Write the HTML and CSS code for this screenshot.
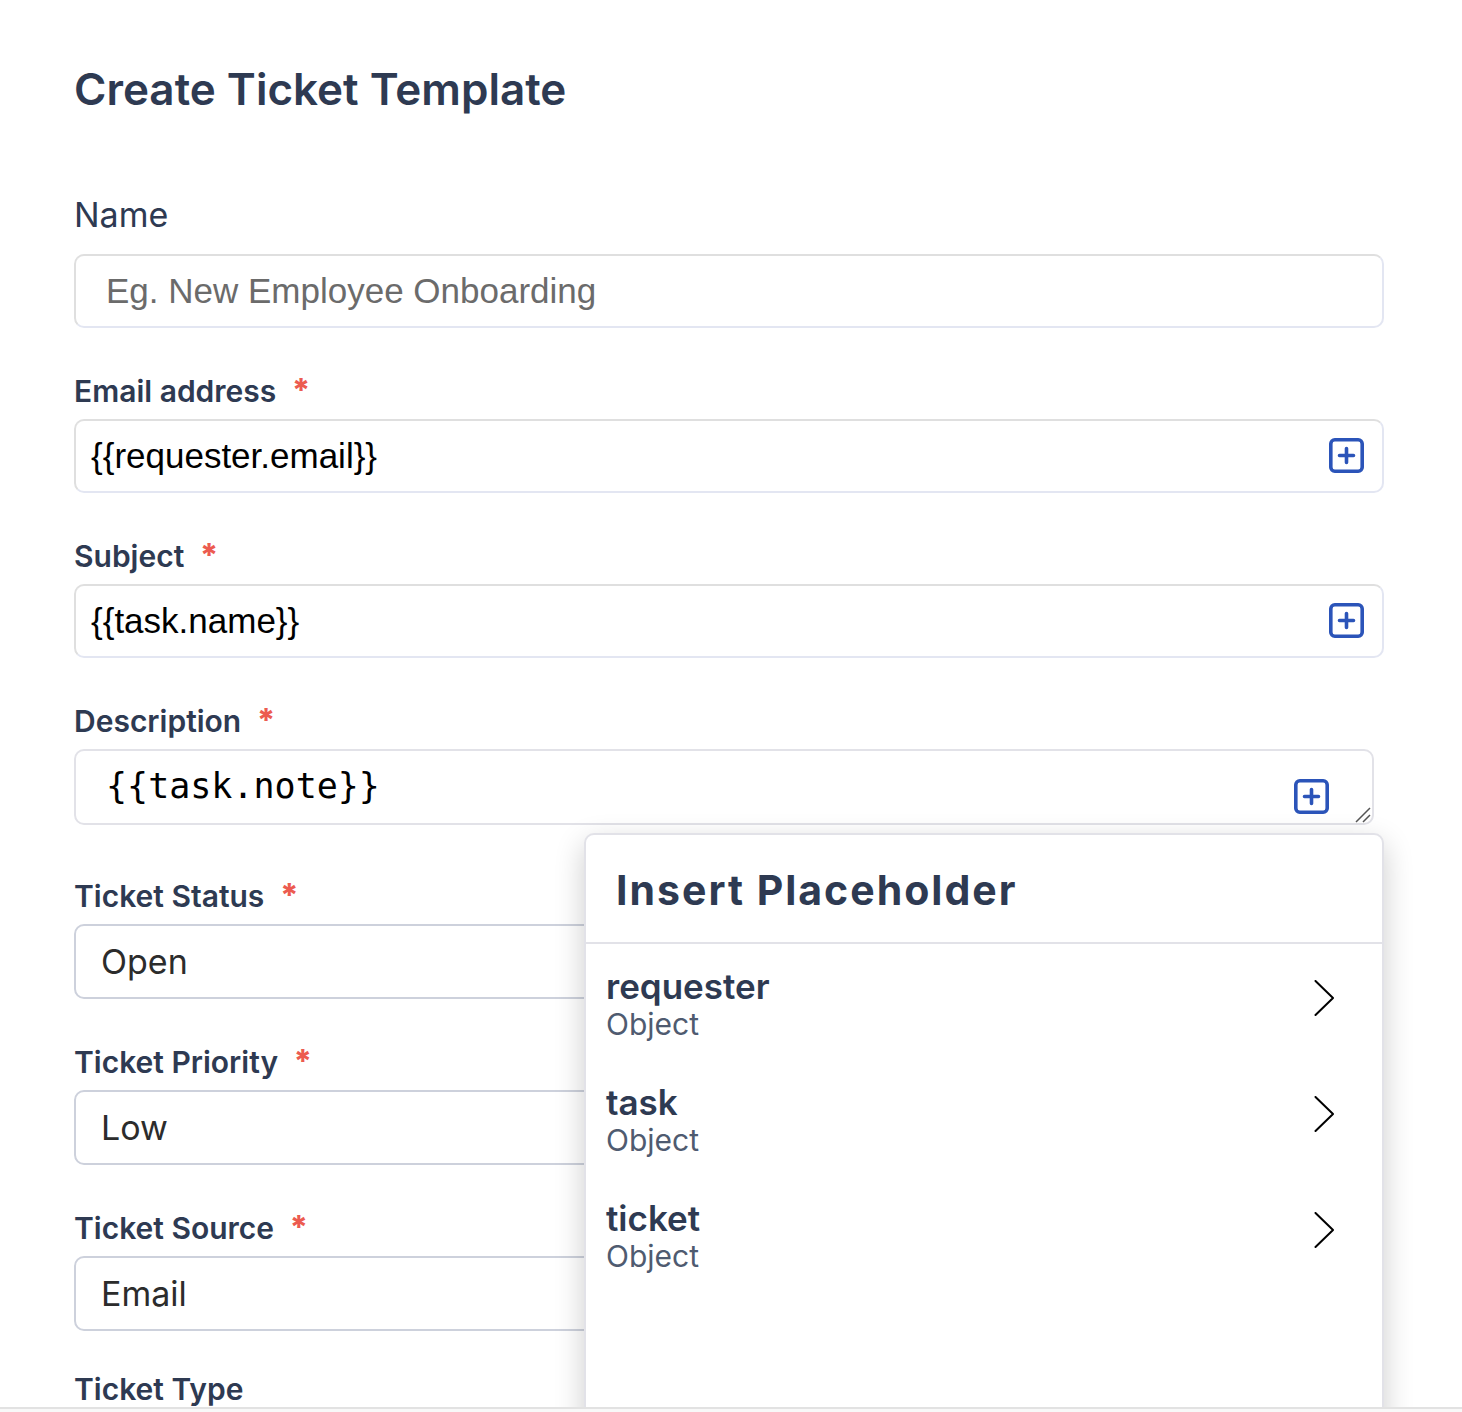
FILE: index.html
```html
<!DOCTYPE html>
<html lang="en">
<head>
<meta charset="utf-8">
<meta name="viewport" content="width=device-width, initial-scale=1">
<title>Create Ticket Template</title>
<link rel="stylesheet" href="styles.css">
</head>
<body>
<svg class="sprite" aria-hidden="true">
  <symbol id="icon-plus" viewBox="0 0 35 35">
    <rect x="1.800" y="1.800" width="31.400" height="31.400" rx="4" fill="none" stroke="currentColor" stroke-width="3.600"/>
    <path d="M17.500 10.500v14M10.500 17.500h14" fill="none" stroke="currentColor" stroke-width="3.600" stroke-linecap="round"/>
  </symbol>
  <symbol id="icon-chevron" viewBox="0 0 20 36">
    <path d="M1.500 1l17.500 17L1.500 35" fill="none" stroke="currentColor" stroke-width="2" stroke-linecap="round" stroke-linejoin="round"/>
  </symbol>
</svg>
<main class="content">
  <h1 class="title">Create Ticket Template</h1>
  <form class="form">
    <div class="field">
      <label class="label label-large" for="name">Name</label>
      <input class="control control-roomy" id="name" type="text" placeholder="Eg. New Employee Onboarding">
    </div>
    <div class="field">
      <label class="label required" for="email">Email address <span class="star">*</span></label>
      <div class="control-wrap">
        <input class="control" id="email" type="text" value="{{requester.email}}">
        <button class="insert" type="button" aria-label="Insert placeholder"><svg><use href="#icon-plus"/></svg></button>
      </div>
    </div>
    <div class="field">
      <label class="label required" for="subject">Subject <span class="star">*</span></label>
      <div class="control-wrap">
        <input class="control" id="subject" type="text" value="{{task.name}}">
        <button class="insert" type="button" aria-label="Insert placeholder"><svg><use href="#icon-plus"/></svg></button>
      </div>
    </div>
    <div class="field field-area">
      <label class="label required" for="description">Description <span class="star">*</span></label>
      <div class="control-wrap">
        <textarea class="area" id="description" rows="1">{{task.note}}</textarea>
        <button class="insert insert-area" type="button" aria-label="Insert placeholder"><svg><use href="#icon-plus"/></svg></button>
        <svg class="grip" viewBox="0 0 16 16" aria-hidden="true"><path d="M1 15L15 1M8 15l7-7" stroke="#555" stroke-width="1.500" fill="none"/></svg>
        <section class="menu" aria-label="Insert Placeholder">
          <h2 class="menu-title">Insert Placeholder</h2>
          <button class="item" type="button"><span class="item-text"><span class="item-name">requester</span><span class="item-type">Object</span></span><svg class="chevron"><use href="#icon-chevron"/></svg></button>
          <button class="item" type="button"><span class="item-text"><span class="item-name">task</span><span class="item-type">Object</span></span><svg class="chevron"><use href="#icon-chevron"/></svg></button>
          <button class="item" type="button"><span class="item-text"><span class="item-name">ticket</span><span class="item-type">Object</span></span><svg class="chevron"><use href="#icon-chevron"/></svg></button>
        </section>
      </div>
    </div>
    <div class="field">
      <label class="label required" for="status">Ticket Status <span class="star">*</span></label>
      <select class="select" id="status"><option>Open</option></select>
    </div>
    <div class="field">
      <label class="label required" for="priority">Ticket Priority <span class="star">*</span></label>
      <select class="select" id="priority"><option>Low</option></select>
    </div>
    <div class="field">
      <label class="label required" for="source">Ticket Source <span class="star">*</span></label>
      <select class="select" id="source"><option>Email</option></select>
    </div>
    <div class="field">
      <label class="label" for="type">Ticket Type</label>
      <select class="select" id="type"><option>Incident</option></select>
    </div>
  </form>
</main>
<footer class="footer"></footer>
</body>
</html>
```
FILE: styles.css
```css
* {
  box-sizing: border-box;
}

body {
  display: flex;
  flex-direction: column;
  height: 100vh;
  margin: 0;
  background: #fff;
  color: #2e3a52;
  font-family: Inter, "Liberation Sans", sans-serif;
}

.sprite {
  position: absolute;
  width: 0;
  height: 0;
}

.content {
  flex: 1;
  min-height: 0;
  overflow: hidden;
  padding: 59px 78px 0 74px;
}

.title {
  margin: 0 0 76px;
  font-size: 44px;
  line-height: 60px;
  font-weight: 600;
}

.form {
  display: flex;
  flex-direction: column;
  gap: 43px;
}

.field {
  display: flex;
  flex-direction: column;
  gap: 8px;
}

.field-area {
  margin-bottom: 8px;
}

.label {
  font-size: 30px;
  line-height: 30px;
  font-weight: 600;
}

.label-large {
  margin-bottom: 11px;
  font-size: 34px;
  line-height: 40px;
  font-weight: 400;
}

.required {
  padding: 5px 0;
}

.star {
  margin-left: 8px;
  color: #ec5b50;
  font-size: 32px;
  line-height: 0;
  font-weight: 800;
}

.control-wrap {
  position: relative;
  display: flex;
}

.control {
  width: 100%;
  height: 74px;
  padding: 0 80px 0 15px;
  border: 2px solid;
  border-color: #dfdfdf #e3e6f2 #e3e6f2 #dfdfdf;
  border-radius: 10px;
  background: #fff;
  color: #000;
  font: 35px "Liberation Sans", Arial, sans-serif;
}

.control-roomy {
  padding: 0 30px;
}

.control::placeholder {
  color: #6b6b6b;
}

.insert {
  position: absolute;
  top: 19px;
  right: 20px;
  width: 35px;
  height: 35px;
  padding: 0;
  border: 0;
  background: none;
  color: #2b54b9;
}

.insert svg {
  display: block;
  width: 35px;
  height: 35px;
}

.insert-area {
  top: 30px;
  right: 55px;
}

.area {
  width: 100%;
  height: 76px;
  margin-right: 10px;
  padding: 14px 30px;
  border: 2px solid #e2e2e8;
  border-radius: 10px;
  background: #fff;
  color: #000;
  font: 35px/42px "DejaVu Sans Mono", monospace;
  resize: none;
  overflow: hidden;
}

.grip {
  position: absolute;
  right: 13px;
  bottom: 2px;
  width: 16px;
  height: 16px;
}

.select {
  width: 100%;
  height: 75px;
  padding: 0 25px;
  border: 2px solid #cdd1dc;
  border-radius: 10px;
  background: #fff;
  color: #2c2c2c;
  font: 34px Inter, "Liberation Sans", sans-serif;
  appearance: none;
}

.menu {
  position: absolute;
  z-index: 1;
  top: 84px;
  right: 0;
  width: 800px;
  max-width: 100%;
  min-height: 640px;
  border: 2px solid #e2e2e8;
  border-radius: 10px;
  background: #fff;
  box-shadow: 0 10px 30px rgba(0, 0, 0, 0.2);
}

.menu-title {
  margin: 0 0 12px;
  padding: 29px 30px 26px;
  border-bottom: 2px solid #e2e2e8;
  font-size: 41px;
  line-height: 52px;
  font-weight: 700;
  letter-spacing: 2px;
}

.item {
  display: flex;
  align-items: flex-start;
  justify-content: space-between;
  width: 100%;
  height: 116px;
  padding: 11px 48px 0 20px;
  border: 0;
  background: none;
  color: inherit;
  font-family: inherit;
  text-align: left;
}

.item-text {
  display: flex;
  flex-direction: column;
}

.item-name {
  font-size: 35px;
  line-height: 38px;
  font-weight: 600;
}

.item-type {
  color: #4f5b70;
  font-size: 30px;
  line-height: 38px;
}

.chevron {
  width: 20px;
  height: 36px;
  margin-top: 13px;
  color: #000;
}

.footer {
  flex: none;
  height: 5px;
  border-top: 2px solid #e2e2e2;
  background: #f8f8f8;
}
```
